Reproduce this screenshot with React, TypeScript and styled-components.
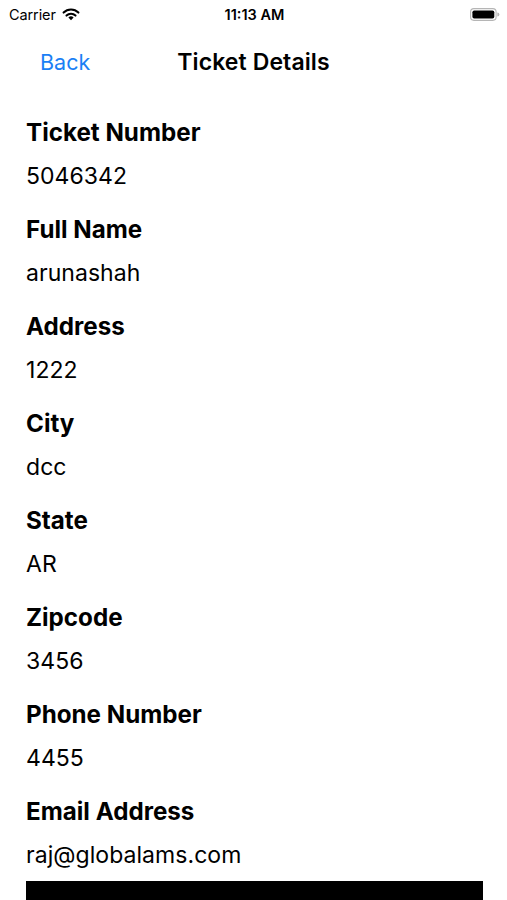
import React from "react";
import styled, { createGlobalStyle } from "styled-components";

const Global = createGlobalStyle`
  html, body { margin: 0; padding: 0; background: #fff; }
  body { font-family: Inter, "Noto Sans", "Liberation Sans", sans-serif; color: #000; }
  * { box-sizing: border-box; }
`;

const Screen = styled.div`
  width: 507px;
  height: 900px;
  overflow: hidden;
  background: #fff;
  display: flex;
  flex-direction: column;
`;

const StatusBar = styled.div`
  flex-shrink: 0;
  height: 28px;
  display: grid;
  grid-template-columns: 1fr auto 1fr;
  align-items: center;
  padding: 0 7px 0 9px;
  font-size: 14.5px;
  color: #000;
`;

const Left = styled.div`
  display: flex;
  align-items: center;
  gap: 6px;
  letter-spacing: -0.1px;
`;

const Time = styled.div`
  font-weight: 600;
  letter-spacing: 0;
`;

const Right = styled.div`
  display: flex;
  justify-content: flex-end;
  align-items: center;
`;

const NavBar = styled.div`
  flex-shrink: 0;
  height: 66px;
  display: grid;
  grid-template-columns: 1fr auto 1fr;
  align-items: center;
  padding-top: 1px;
`;

const BackButton = styled.span`
  justify-self: start;
  padding-left: 40px;
  color: #1a7ff5;
  font-size: 21.5px;
  font-weight: 400;
`;

const Title = styled.span`
  font-size: 23px;
  font-weight: 600;
  letter-spacing: 0.1px;
`;

const Content = styled.div`
  flex-shrink: 0;
  padding: 24px 24px 0 26px;
  display: flex;
  flex-direction: column;
  gap: 24px;
`;

const Field = styled.div`
  display: flex;
  flex-direction: column;
  gap: 13px;
`;

const Label = styled.div`
  font-size: 24.2px;
  line-height: 30px;
  font-weight: 700;
  letter-spacing: 0;
`;

const Value = styled.div`
  font-size: 23px;
  line-height: 30px;
  font-weight: 400;
  letter-spacing: 0.05px;
`;

const Bar = styled.div`
  margin-top: -13px;
  width: 457px;
  height: 40px;
  background: #000;
`;

const Wifi = () => (
  <svg width="18" height="14" viewBox="0 0 18 14">
    <path d="M9 13.2 L6.4 10.5 A3.7 3.7 0 0 1 11.6 10.5 Z" fill="#000" />
    <path d="M4.5 8.6 A6.4 6.4 0 0 1 13.5 8.6" stroke="#000" strokeWidth="2.1" fill="none" strokeLinecap="round" />
    <path d="M1.6 5.6 A10.4 10.4 0 0 1 16.4 5.6" stroke="#000" strokeWidth="2.1" fill="none" strokeLinecap="round" />
  </svg>
);

const Battery = () => (
  <svg width="30" height="13" viewBox="0 0 30 13">
    <rect x="0.6" y="0.6" width="25.5" height="11.8" rx="3.3" fill="none" stroke="#b5b5b5" strokeWidth="1.1" />
    <rect x="2.4" y="2.4" width="21.9" height="8.2" rx="1.8" fill="#000" />
    <path d="M27.3 4.4 A2 2 0 0 1 27.3 8.6 Z" fill="#b5b5b5" />
  </svg>
);

const fields: [string, string][] = [
  ["Ticket Number", "5046342"],
  ["Full Name", "arunashah"],
  ["Address", "1222"],
  ["City", "dcc"],
  ["State", "AR"],
  ["Zipcode", "3456"],
  ["Phone Number", "4455"],
  ["Email Address", "raj@globalams.com"],
];

export default function App() {
  return (
    <Screen>
      <Global />
      <StatusBar>
        <Left>
          <span>Carrier</span>
          <Wifi />
        </Left>
        <Time>11:13 AM</Time>
        <Right>
          <Battery />
        </Right>
      </StatusBar>
      <NavBar>
        <BackButton>Back</BackButton>
        <Title>Ticket Details</Title>
        <span />
      </NavBar>
      <Content>
        {fields.map(([l, v]) => (
          <Field key={l}>
            <Label>{l}</Label>
            <Value>{v}</Value>
          </Field>
        ))}
        <Bar />
      </Content>
    </Screen>
  );
}
